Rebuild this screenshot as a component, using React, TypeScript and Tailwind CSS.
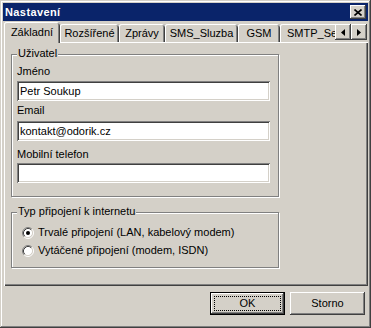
import React from "react";

const raised =
  "shadow-[inset_-1px_-1px_#404040,inset_1px_1px_#fff,inset_-2px_-2px_#808080,inset_2px_2px_#d4d0c8]";
const sunken =
  "shadow-[inset_1px_1px_#808080,inset_-1px_-1px_#fff,inset_2px_2px_#404040,inset_-2px_-2px_#d4d0c8]";

const tabs = [
  { label: "Rozšířené", w: "w-[59px]" },
  { label: "Zprávy", w: "w-[46px]" },
  { label: "SMS_Sluzba", w: "w-[73px]" },
  { label: "GSM", w: "w-[42px]" },
];

function Radio({ checked, label }: { checked?: boolean; label: string }) {
  return (
    <div className="flex items-center gap-[4px] h-[13px]">
      <svg width="12" height="12" viewBox="0 0 12 12" className="shrink-0">
        <circle cx="6" cy="6" r="4.5" fill="#fff" />
        <path d="M2.11 9.89 A5.5 5.5 0 0 1 9.89 2.11" fill="none" stroke="#808080" />
        <path d="M9.89 2.11 A5.5 5.5 0 0 1 2.11 9.89" fill="none" stroke="#fff" />
        <path d="M2.82 9.18 A4.5 4.5 0 0 1 9.18 2.82" fill="none" stroke="#404040" />
        <path d="M9.18 2.82 A4.5 4.5 0 0 1 2.82 9.18" fill="none" stroke="#d4d0c8" />
        {checked && <circle cx="6" cy="6" r="2" fill="#000" />}
      </svg>
      <span className="leading-[13px] whitespace-nowrap">{label}</span>
    </div>
  );
}

function Field({ label, value, labelMt, inputMt }: { label: string; value: string; labelMt: string; inputMt: string }) {
  return (
    <>
      <div className={`leading-[13px] ${labelMt}`}>{label}</div>
      <div className={`h-[20px] w-[253px] bg-white ${sunken} ${inputMt} flex items-center pl-[3px] leading-[13px] whitespace-nowrap`}>
        {value}
      </div>
    </>
  );
}

export default function App() {
  return (
    <div className="w-[371px] h-[328px] bg-[#d4d0c8] p-[3px] flex flex-col text-[11px] text-black font-['Liberation_Sans',Arial,sans-serif] shadow-[inset_-1px_-1px_#404040,inset_1px_1px_#d4d0c8,inset_-2px_-2px_#808080,inset_2px_2px_#fff]">
      {/* Title bar */}
      <div className="h-[18px] bg-[#0a246a] flex items-center justify-between pl-[2px] pr-[2px]">
        <span className="text-white font-bold leading-[13px] tracking-[0.4px]">Nastavení</span>
        <div className={`w-[16px] h-[14px] bg-[#d4d0c8] ${raised} flex items-center justify-center`}>
          <svg width="8" height="7" viewBox="0 0 8 7">
            <path d="M0.5 0.5 L7.5 6.5 M7.5 0.5 L0.5 6.5" stroke="#000" strokeWidth="1.6" />
          </svg>
        </div>
      </div>

      {/* Tab control */}
      <div className="mt-[1px] ml-[1px] w-[364px] flex flex-col">
        <div className="h-[20px] flex items-end">
          <div className="relative z-10 w-[56px] h-[21px] -mb-[1px] bg-[#d4d0c8] rounded-t-[3px] shadow-[inset_1px_0_#fff,inset_0_1px_#fff,inset_-1px_0_#404040,inset_-2px_0_#808080] flex items-center justify-center pb-[1px] whitespace-nowrap">
            Základní
          </div>
          {tabs.map((t) => (
            <div
              key={t.label}
              className={`${t.w} h-[18px] rounded-t-[3px] shadow-[inset_1px_0_#fff,inset_0_1px_#fff,inset_-1px_0_#404040,inset_-2px_0_#808080] flex items-center justify-center whitespace-nowrap`}
            >
              {t.label}
            </div>
          ))}
          <div className="w-[55px] h-[18px] rounded-tl-[3px] shadow-[inset_1px_0_#fff,inset_0_1px_#fff] overflow-hidden flex items-center pl-[7px] whitespace-nowrap">
            SMTP_Server
          </div>
          <div className="self-start mt-[2px] flex">
            <div className={`w-[16px] h-[16px] ${raised} flex items-center justify-center`}>
              <svg width="4" height="7" viewBox="0 0 4 7">
                <path d="M4 0 L0 3.5 L4 7 Z" fill="#000" />
              </svg>
            </div>
            <div className={`w-[16px] h-[16px] ${raised} flex items-center justify-center`}>
              <svg width="4" height="7" viewBox="0 0 4 7">
                <path d="M0 0 L4 3.5 L0 7 Z" fill="#000" />
              </svg>
            </div>
          </div>
        </div>

        <div className="h-[244px] shadow-[inset_1px_1px_#fff,inset_-1px_-1px_#404040,inset_-2px_-2px_#808080] pt-[12px] pl-[7px] flex flex-col">
          {/* Uživatel */}
          <div className="relative w-[268px] h-[143px] border border-[#808080] shadow-[inset_1px_1px_#fff,1px_1px_#fff] pt-[10px] pl-[5px] flex flex-col">
            <span className="absolute -top-[8px] left-[5px] px-[1px] bg-[#d4d0c8] leading-[13px]">Uživatel</span>
            <Field label="Jméno" value="Petr Soukup" labelMt="mt-0" inputMt="mt-[3px]" />
            <Field label="Email" value="kontakt@odorik.cz" labelMt="mt-[3px]" inputMt="mt-[4px]" />
            <Field label="Mobilní telefon" value="" labelMt="mt-[7px]" inputMt="mt-[2px]" />
          </div>

          {/* Typ připojení */}
          <div className="relative mt-[15px] w-[268px] h-[56px] border border-[#808080] shadow-[inset_1px_1px_#fff,1px_1px_#fff] pt-[13px] pl-[10px] flex flex-col gap-[5px]">
            <span className="absolute -top-[8px] left-[5px] px-[1px] bg-[#d4d0c8] leading-[13px]">Typ připojení k internetu</span>
            <Radio checked label="Trvalé připojení (LAN, kabelový modem)" />
            <Radio label="Vytáčené připojení (modem, ISDN)" />
          </div>
        </div>
      </div>

      {/* Buttons */}
      <div className="mt-[6px] flex justify-end gap-[5px] pr-[3px]">
        <div className="relative w-[75px] h-[23px] border border-black shadow-[inset_-1px_-1px_#404040,inset_1px_1px_#fff,inset_-2px_-2px_#808080] flex items-center justify-center">
          <span className="absolute inset-[3px] border border-dotted border-black" />
          OK
        </div>
        <div className={`w-[75px] h-[23px] ${raised} flex items-center justify-center`}>Storno</div>
      </div>
    </div>
  );
}
